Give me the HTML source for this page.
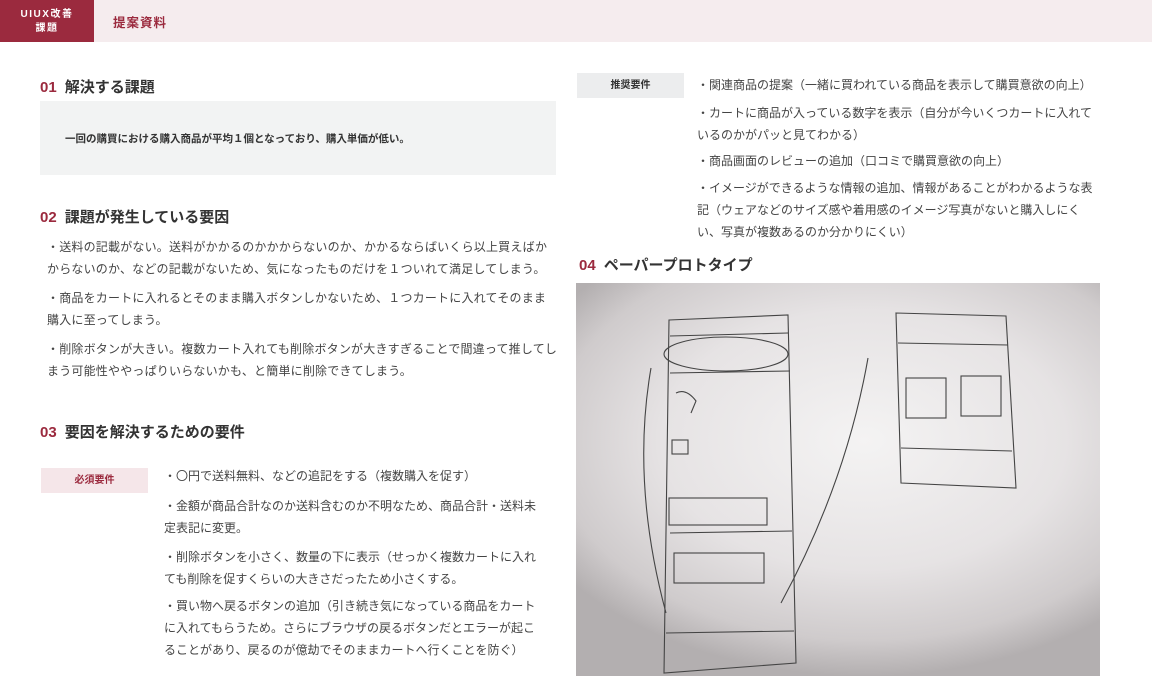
<!DOCTYPE html>
<html><head><meta charset="utf-8"><style>
*{margin:0;padding:0;box-sizing:border-box}
body{width:1152px;height:700px;overflow:hidden;background:#fff;position:relative;font-family:"Liberation Sans","Noto Sans CJK JP",sans-serif;color:#333}
.a{position:absolute;white-space:nowrap}
.hd{position:absolute;left:0;top:0;width:1152px;height:42px;background:#f5ecee}
.logo{position:absolute;left:0;top:0;width:94px;height:42px;background:#9b2a3e;color:#fff;font-size:10px;font-weight:bold;text-align:center;line-height:14px;padding-top:8px;letter-spacing:1.5px}
.h{font-size:15px;font-weight:bold;color:#333}
.h b{color:#9b2a3e;margin-right:8px}
.t{font-size:12px;line-height:22px;letter-spacing:.2px;color:#444}
.r{letter-spacing:0}
.lab{position:absolute;font-size:10px;font-weight:bold;text-align:center;line-height:25px}
</style></head><body>
<div class="hd"></div>
<div class="logo">UIUX改善<br>課題</div>
<div class="a" style="left:113px;top:12px;font-size:12.5px;font-weight:bold;color:#9b2a3e;letter-spacing:1px">提案資料</div>

<div class="a h" style="left:40px;top:76px"><b>01</b>解決する課題</div>
<div class="a" style="left:40px;top:101px;width:516px;height:74px;background:#f2f3f3"></div>
<div class="a" style="left:65px;top:131px;font-size:10.5px;font-weight:bold;color:#333">一回の購買における購入商品が平均１個となっており、購入単価が低い。</div>

<div class="a h" style="left:40px;top:206px"><b>02</b>課題が発生している要因</div>
<div class="a t" style="left:47px;top:236px">・送料の記載がない。送料がかかるのかかからないのか、かかるならばいくら以上買えばか<br>からないのか、などの記載がないため、気になったものだけを１ついれて満足してしまう。</div>
<div class="a t" style="left:47px;top:287px">・商品をカートに入れるとそのまま購入ボタンしかないため、１つカートに入れてそのまま<br>購入に至ってしまう。</div>
<div class="a t" style="left:47px;top:338px">・削除ボタンが大きい。複数カート入れても削除ボタンが大きすぎることで間違って推してし<br>まう可能性ややっぱりいらないかも、と簡単に削除できてしまう。</div>

<div class="a h" style="left:40px;top:421px"><b>03</b>要因を解決するための要件</div>
<div class="lab" style="left:41px;top:468px;width:107px;background:#f5e6e9;color:#9b2a3e">必須要件</div>
<div class="a t r" style="left:164px;top:465px">・〇円で送料無料、などの追記をする（複数購入を促す）</div>
<div class="a t r" style="left:164px;top:495px">・金額が商品合計なのか送料含むのか不明なため、商品合計・送料未<br>定表記に変更。</div>
<div class="a t r" style="left:164px;top:546px">・削除ボタンを小さく、数量の下に表示（せっかく複数カートに入れ<br>ても削除を促すくらいの大きさだったため小さくする。</div>
<div class="a t r" style="left:164px;top:595px">・買い物へ戻るボタンの追加（引き続き気になっている商品をカート<br>に入れてもらうため。さらにブラウザの戻るボタンだとエラーが起こ<br>ることがあり、戻るのが億劫でそのままカートへ行くことを防ぐ）</div>

<div class="lab" style="left:577px;top:73px;width:107px;background:#ecedee;color:#333">推奨要件</div>
<div class="a t r" style="left:697px;top:74px">・関連商品の提案（一緒に買われている商品を表示して購買意欲の向上）</div>
<div class="a t r" style="left:697px;top:102px">・カートに商品が入っている数字を表示（自分が今いくつカートに入れて<br>いるのかがパッと見てわかる）</div>
<div class="a t r" style="left:697px;top:150px">・商品画面のレビューの追加（口コミで購買意欲の向上）</div>
<div class="a t r" style="left:697px;top:177px">・イメージができるような情報の追加、情報があることがわかるような表<br>記（ウェアなどのサイズ感や着用感のイメージ写真がないと購入しにく<br>い、写真が複数あるのか分かりにくい）</div>

<div class="a h" style="left:579px;top:254px"><b>04</b>ペーパープロトタイプ</div>
<div class="a" style="left:576px;top:283px;width:524px;height:393px;background:radial-gradient(ellipse 70% 60% at 55% 40%,#f4f3f3 0%,#e6e3e4 55%,#cfcbcc 85%,#b3afb0 100%)"></div>
<svg class="a" style="left:576px;top:283px" width="524" height="393" fill="none" stroke="#444" stroke-width="1.1">
<path d="M93 37 L212 32 L220 380 L88 390 Z"/>
<path d="M94 53 L212 50"/><path d="M94 90 L214 88"/><path d="M94 250 L216 248"/><path d="M90 350 L218 348"/>
<ellipse cx="150" cy="71" rx="62" ry="17"/>
<path d="M100 110 Q110 105 120 118 L115 130"/><rect x="96" y="157" width="16" height="14"/>
<rect x="93" y="215" width="98" height="27"/><rect x="98" y="270" width="90" height="30"/>
<path d="M320 30 L430 33 L440 205 L325 200 Z"/><path d="M322 60 L432 62"/><path d="M325 165 L436 168"/>
<rect x="330" y="95" width="40" height="40"/><rect x="385" y="93" width="40" height="40"/>
<path d="M75 85 Q55 200 90 330"/><path d="M205 320 Q270 200 292 75"/>
</svg>
</body></html>
